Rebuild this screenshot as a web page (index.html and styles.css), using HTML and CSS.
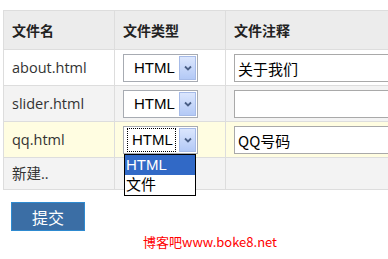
FILE: index.html
```
<!DOCTYPE html>
<html>
	<head>
		<title>文件列表</title>
		<link rel="stylesheet" href="styles.css">
	</head>
	<body>
		<div class="page">
			<table class="files">
				<colgroup>
					<col class="c-name" />
					<col class="c-type" />
					<col class="c-note" />
				</colgroup>
				<thead>
					<tr><th>文件名</th><th>文件类型</th><th>文件注释</th></tr>
				</thead>
				<tbody>
					<tr>
						<td>about.html</td>
						<td>
							<div class="select"><span class="value">HTML</span><span class="arrow"><svg width="8" height="6" viewBox="0 0 8 6"><path d="M1 1.5 L4 4.5 L7 1.5" fill="none" stroke="#4a5f86" stroke-width="1.8"/></svg></span></div>
						</td>
						<td><input class="note" type="text" value="关于我们" /></td>
					</tr>
					<tr class="alt">
						<td>slider.html</td>
						<td>
							<div class="select"><span class="value">HTML</span><span class="arrow"><svg width="8" height="6" viewBox="0 0 8 6"><path d="M1 1.5 L4 4.5 L7 1.5" fill="none" stroke="#4a5f86" stroke-width="1.8"/></svg></span></div>
						</td>
						<td><input class="note" type="text" value="" /></td>
					</tr>
					<tr class="hover">
						<td>qq.html</td>
						<td class="open">
							<div class="select"><span class="value focus">HTML</span><span class="arrow"><svg width="8" height="6" viewBox="0 0 8 6"><path d="M1 1.5 L4 4.5 L7 1.5" fill="none" stroke="#4a5f86" stroke-width="1.8"/></svg></span></div>
							<ul class="options">
								<li class="picked">HTML</li>
								<li>文件</li>
							</ul>
						</td>
						<td><input class="note" type="text" value="QQ号码" /></td>
					</tr>
					<tr class="alt new">
						<td>新建..</td>
						<td></td>
						<td></td>
					</tr>
				</tbody>
			</table>
			<button type="button" class="submit">提交</button>
			<p class="credit">博客吧www.boke8.net</p>
		</div>
	</body>
</html>
```

FILE: styles.css
```
html,
body {
	margin: 0;
	background-color: white;
	overflow: hidden;
}
.page {
	padding: 10px 0 0 3px;
	width: 430px;
	font-family: "Open Sans", "Noto Sans CJK SC", sans-serif;
	font-size: 14.5px;
	color: #333;
}
.files {
	border-collapse: collapse;
	table-layout: fixed;
	width: 430px;
	border: 1px solid #dddddd;
}
.c-name,
.c-type {
	width: 111px;
}
.files th {
	background-color: #ececec;
	border: 1px solid #dddddd;
	text-align: left;
	font-family: "Noto Sans CJK SC", sans-serif;
	font-weight: bold;
	font-size: 14px;
	color: #222;
	height: 38px;
	padding: 0 8px;
	line-height: 18px;
}
.files td {
	border: 1px solid #dddddd;
	padding: 4px 8px 3px 8px;
	height: 28px;
	line-height: 20px;
	background-color: white;
	position: relative;
}
.files tr.alt td {
	background-color: #f3f3f3;
}
.files tr.hover td {
	background-color: #fffde1;
}
.files tr.new td {
	height: 23px;
	padding: 4px 8px;
}
.select {
	display: flex;
	width: 72px;
	height: 24px;
	border: 1px solid #a7abb2;
	background-color: white;
	padding: 1px 0 1px 1px;
}
.value {
	flex: 1;
	font-family: "Liberation Sans", sans-serif;
	font-size: 15px;
	color: black;
	line-height: 20px;
	padding: 1px 0 1px 6px;
	margin: 0 3px 0 2px;
	border: 1px solid transparent;
}
.value.focus {
	border: 1px dotted black;
	padding-left: 4px;
}
.arrow {
	width: 15px;
	margin-right: 1px;
	border: 1px solid #a6bbe8;
	background: linear-gradient(to bottom, #dbe6fd, #b3c9f6);
	display: flex;
	align-items: center;
	justify-content: center;
}
.options {
	position: absolute;
	left: 9px;
	top: 32px;
	width: 70px;
	margin: 0;
	padding: 0;
	list-style: none;
	border: 1px solid black;
	background-color: white;
	font-family: "Liberation Sans", "Noto Sans CJK SC", sans-serif;
	font-size: 15px;
	color: black;
	z-index: 2;
}
.options li {
	height: 20px;
	line-height: 20px;
	padding-left: 1px;
}
.options li.picked {
	background-color: #3169c6;
	color: white;
}
.note {
	box-sizing: border-box;
	width: 220px;
	height: 28px;
	border: 1px solid #a9a9a9;
	padding: 0 3px;
	font-family: "Noto Sans CJK SC", sans-serif;
	font-size: 15px;
	color: black;
	background-color: white;
}
.submit {
	display: block;
	margin: 12px 0 0 8px;
	width: 74px;
	height: 29px;
	background-color: #3b6ea5;
	border: 1px solid #2e8ad0;
	color: white;
	font-family: "Noto Sans CJK SC", sans-serif;
	font-size: 16px;
	padding: 0;
	cursor: pointer;
}
.credit {
	margin: 2px 0 0 0;
	width: 414px;
	text-align: center;
	color: red;
	font-family: "Noto Sans CJK SC", sans-serif;
	font-size: 13px;
	line-height: 18px;
}
```
